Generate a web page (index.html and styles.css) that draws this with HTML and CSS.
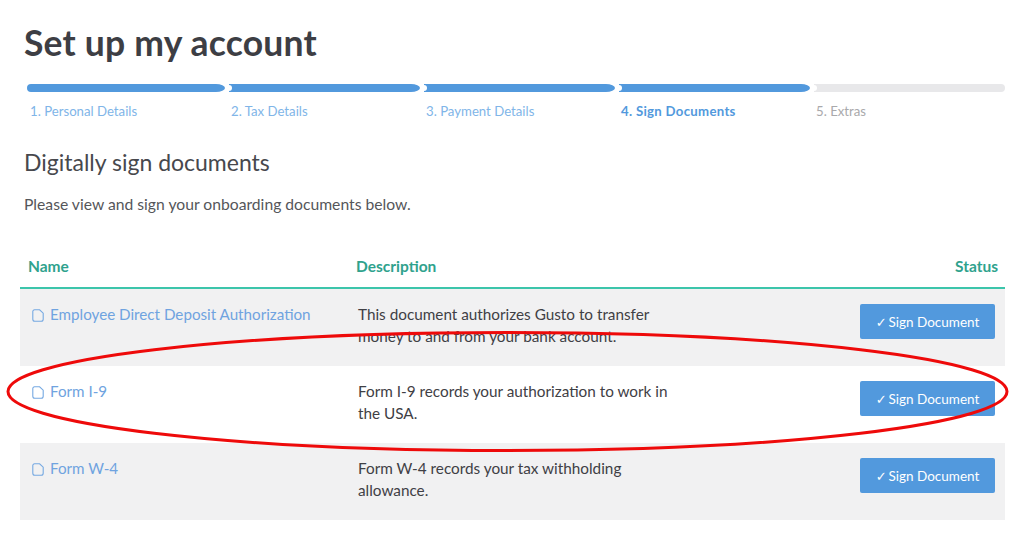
FILE: index.html
```html
<!DOCTYPE html>
<html lang="en">
<head>
    <meta charset="UTF-8">
    <meta name="viewport" content="width=device-width, initial-scale=1.0">
    <title>Set up my account</title>
    <link rel="stylesheet" href="styles.css">
</head>
<body>

    <h1>Set up my account</h1>

    <div class="steps">
        <div class="step done"><div class="bar"></div><span>1. Personal Details</span></div>
        <div class="step done"><div class="bar"></div><span>2. Tax Details</span></div>
        <div class="step done"><div class="bar"></div><span>3. Payment Details</span></div>
        <div class="step current"><div class="bar"></div><span>4. Sign Documents</span></div>
        <div class="step"><div class="bar"></div><span>5. Extras</span></div>
    </div>

    <h2>Digitally sign documents</h2>
    <p class="intro">Please view and sign your onboarding documents below.</p>

    <div class="table">
        <div class="head">
            <div class="col-name">Name</div>
            <div class="col-desc">Description</div>
            <div class="col-status">Status</div>
        </div>

        <div class="row">
            <a class="col-name doc">
                <svg class="doc-icon" viewBox="0 0 12 13"><path d="M2.5 .8H7.6L11.2 4.2V10.2A2 2 0 0 1 9.2 12.2H2.8A2 2 0 0 1 .8 10.2V2.5A1.700 1.700 0 0 1 2.500 .8Z"/></svg>
                Employee Direct Deposit Authorization
            </a>
            <div class="col-desc">This document authorizes Gusto to transfer money to and from your bank account.</div>
            <div class="col-status"><button><span class="tick">✓</span>Sign Document</button></div>
        </div>

        <div class="row">
            <a class="col-name doc">
                <svg class="doc-icon" viewBox="0 0 12 13"><path d="M2.5 .8H7.6L11.2 4.2V10.2A2 2 0 0 1 9.2 12.2H2.8A2 2 0 0 1 .8 10.2V2.5A1.700 1.700 0 0 1 2.500 .8Z"/></svg>
                Form I-9
            </a>
            <div class="col-desc">Form I-9 records your authorization to work in the USA.</div>
            <div class="col-status"><button><span class="tick">✓</span>Sign Document</button></div>
        </div>

        <div class="row">
            <a class="col-name doc">
                <svg class="doc-icon" viewBox="0 0 12 13"><path d="M2.5 .8H7.6L11.2 4.2V10.2A2 2 0 0 1 9.2 12.2H2.8A2 2 0 0 1 .8 10.2V2.5A1.700 1.700 0 0 1 2.500 .8Z"/></svg>
                Form W-4
            </a>
            <div class="col-desc">Form W-4 records your tax withholding allowance.</div>
            <div class="col-status"><button><span class="tick">✓</span>Sign Document</button></div>
        </div>
    </div>

    <!-- red marker drawn over the screenshot -->
    <svg class="marker" viewBox="0 0 1024 547"><ellipse cx="507.500" cy="391.500" rx="499.500" ry="59"/></svg>

</body>
</html>
```

FILE: styles.css
```css
body {
    font-family: Lato, "Open Sans", sans-serif;
    background-color: #fff;
    color: #3f4045;
    margin: 0;
    padding: 24px 19px 0 20px;
    height: 523px;
    overflow: hidden;
    position: relative;
}
h1 {
    margin: 0 0 0 4px;
    font-size: 35.500px;
    line-height: 38px;
    font-weight: 700;
    letter-spacing: .2px;
    color: #3d3e44;
}
.steps {
    display: flex;
    margin: 22px 0 0 7px;
}
.step {
    flex: 0 0 195px;
    font-size: 13.200px;
    color: #80b5e8;
}
.step:first-child {
    flex-basis: 202px;
}
.step:last-child {
    flex: 1;
    color: #a9a9ab;
}
.step span {
    display: block;
    margin: 11px 0 0 2px;
    line-height: 16px;
}
.step:first-child span {
    margin-left: 3px;
}
.bar {
    position: relative;
    height: 8px;
    margin-right: 4px;
    background-color: #e8e8ea;
    border-radius: 0 4px 4px 0;
}
.step:last-child .bar {
    margin-right: 0;
}
.done .bar,
.current .bar {
    background-color: #5299dd;
    border-radius: 0 9px 9px 0 / 0 4px 4px 0;
}
.step:first-child .bar {
    border-radius: 4px 9px 9px 4px / 4px;
}
/* notch cut out of the start of each step */
.step:not(:first-child) .bar::before {
    content: "";
    position: absolute;
    left: -3px;
    top: 1px;
    width: 6px;
    height: 6px;
    border-radius: 50%;
    background-color: #fff;
}
.current {
    color: #5299dd;
    font-weight: 700;
    letter-spacing: .3px;
}
h2 {
    margin: 29px 0 0 4px;
    font-size: 23px;
    line-height: 28px;
    font-weight: 400;
    color: #47484d;
}
.intro {
    margin: 18px 0 0 4px;
    font-size: 15.700px;
    line-height: 20px;
    color: #55565a;
}
.table {
    margin-top: 38px;
}
.head {
    display: flex;
    align-items: center;
    height: 27px;
    padding-bottom: 8px;
    border-bottom: 2px solid #3cc5ab;
    font-size: 15.500px;
    font-weight: 700;
    color: #2fa28d;
}
.row {
    display: flex;
    height: 77px;
    padding-top: 14px;
    box-sizing: border-box;
    font-size: 15.300px;
    line-height: 22px;
}
.row:nth-child(even) {
    background-color: #f1f1f2;
}
.col-name {
    width: 336px;
    box-sizing: border-box;
    padding-left: 8px;
}
.col-desc {
    width: 312px;
    padding-left: 2px;
    box-sizing: border-box;
}
.col-status {
    flex: 1;
    text-align: right;
    padding-right: 7px;
}
.row .col-status {
    padding-right: 10px;
}
.head .col-desc {
    padding-left: 0;
}
.doc {
    display: flex;
    align-items: flex-start;
    padding-left: 12px;
    color: #6fa3e0;
    font-size: 15.200px;
    line-height: 22px;
    gap: 6px;
    white-space: nowrap;
}
.doc-icon {
    width: 12px;
    height: 13px;
    margin-top: 6px;
    flex: none;
    fill: none;
    stroke: #76a9e2;
    stroke-width: 1.100;
}
button {
    width: 135px;
    height: 35px;
    margin-top: 1px;
    padding: 0;
    background-color: #5299dd;
    color: #fff;
    border: none;
    border-radius: 2px;
    font-family: inherit;
    font-size: 13.500px;
}
.tick {
    margin-right: 2px;
    font-size: 13px;
    font-family: "DejaVu Sans", sans-serif;
}
.marker {
    position: absolute;
    left: 0;
    top: 0;
    width: 1024px;
    height: 547px;
    fill: none;
    stroke: #ee0a0a;
    stroke-width: 3;
}
```
